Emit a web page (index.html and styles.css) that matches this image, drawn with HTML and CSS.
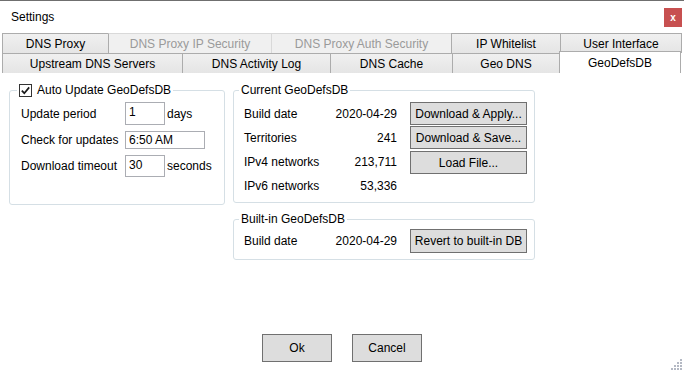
FILE: index.html
```html
<!DOCTYPE html>
<html lang="en">
  <head>
    <meta charset="UTF-8" />
    <title>Settings</title>
    <link rel="stylesheet" href="styles.css">
  </head>
  <body>
    <div class="window">
      <header class="titlebar">
        <span class="title">Settings</span>
        <span class="close">x</span>
      </header>

      <nav class="tabs">
        <div class="tab-row row-top">
          <div class="tab">DNS Proxy</div>
          <div class="tab disabled">DNS Proxy IP Security</div>
          <div class="tab disabled">DNS Proxy Auth Security</div>
          <div class="tab">IP Whitelist</div>
          <div class="tab">User Interface</div>
        </div>
        <div class="tab-row row-bottom">
          <div class="tab">Upstream DNS Servers</div>
          <div class="tab">DNS Activity Log</div>
          <div class="tab">DNS Cache</div>
          <div class="tab">Geo DNS</div>
          <div class="tab selected">GeoDefsDB</div>
        </div>
      </nav>

      <main class="content">
        <fieldset class="group update">
          <legend>
            <svg class="check" width="13" height="13" viewBox="0 0 13 13">
              <rect x="0.5" y="0.5" width="12" height="12" fill="#fff" stroke="#333" />
              <path d="M2.8 6.6 L5.3 9.2 L10.2 3.4" fill="none" stroke="#1a1a1a" stroke-width="1.7" />
            </svg>
            Auto Update GeoDefsDB
          </legend>
          <div class="settings-grid">
            <span>Update period</span>
            <input class="field num" type="text" value="1" />
            <span>days</span>

            <span>Check for updates</span>
            <input class="field time" type="text" value="6:50 AM" />

            <span>Download timeout</span>
            <input class="field timeout" type="text" value="30" />
            <span>seconds</span>
          </div>
        </fieldset>

        <div class="db-col">
          <fieldset class="group current">
            <legend>Current GeoDefsDB</legend>
            <div class="db-body">
              <div class="info">
                <span>Build date</span><span class="val">2020-04-29</span>
                <span>Territories</span><span class="val">241</span>
                <span>IPv4 networks</span><span class="val">213,711</span>
                <span>IPv6 networks</span><span class="val">53,336</span>
              </div>
              <div class="actions">
                <button class="btn">Download &amp; Apply...</button>
                <button class="btn">Download &amp; Save...</button>
                <button class="btn load">Load File...</button>
              </div>
            </div>
          </fieldset>

          <fieldset class="group builtin">
            <legend>Built-in GeoDefsDB</legend>
            <div class="db-body">
              <div class="info">
                <span>Build date</span><span class="val">2020-04-29</span>
              </div>
              <div class="actions">
                <button class="btn revert">Revert to built-in DB</button>
              </div>
            </div>
          </fieldset>
        </div>
      </main>

      <footer class="footer">
        <button class="btn dialog">Ok</button>
        <button class="btn dialog">Cancel</button>
      </footer>

      <svg class="grip" width="12" height="12" viewBox="0 0 12 12">
        <g fill="#b4b9c4">
          <rect x="10" y="1" width="2" height="2" />
          <rect x="7" y="4" width="2" height="2" />
          <rect x="10" y="4" width="2" height="2" />
          <rect x="4" y="7" width="2" height="2" />
          <rect x="7" y="7" width="2" height="2" />
          <rect x="10" y="7" width="2" height="2" />
          <rect x="1" y="10" width="2" height="2" />
          <rect x="4" y="10" width="2" height="2" />
          <rect x="7" y="10" width="2" height="2" />
          <rect x="10" y="10" width="2" height="2" />
        </g>
      </svg>
    </div>
  </body>
</html>
```

FILE: styles.css
```css
* {
  box-sizing: border-box;
  margin: 0;
  padding: 0;
}

body {
  font-family: "Segoe UI", "Liberation Sans", sans-serif;
  font-size: 12px;
  color: #000;
  background: #fff;
}

.window {
  position: relative;
  width: 684px;
  height: 372px;
  display: flex;
  flex-direction: column;
  border-top: 1px solid #6f6f6f;
  background: #fff;
}

/* title bar */
.titlebar {
  height: 32px;
  display: flex;
  align-items: center;
  justify-content: space-between;
  padding: 0 2px 0 11px;
}

.close {
  width: 18px;
  height: 19px;
  background: #c75050;
  color: #fff;
  font-size: 10px;
  font-weight: bold;
  display: flex;
  align-items: center;
  justify-content: center;
}

/* tabs */
.tabs {
  padding-left: 2px;
}

.tab-row {
  display: grid;
  height: 20px;
}

.row-top {
  grid-template-columns: 106px 163px 180px 109px 122px;
}

.row-bottom {
  grid-template-columns: 180px 148px 122px 107px 122px;
}

.tab {
  display: flex;
  align-items: center;
  justify-content: center;
  border-top: 1px solid #acacac;
  border-left: 1px solid #acacac;
  background: linear-gradient(#f0f0f0, #e5e5e5);
  white-space: nowrap;
}

.tab:last-child {
  border-right: 1px solid #acacac;
}

.tab.disabled {
  background: #f0f0f0;
  color: #9a9a9a;
  border-top-color: #d9d9d9;
}

.tab.disabled + .tab.disabled {
  border-left-color: #d9d9d9;
}

.tab.selected {
  background: #fff;
  margin-top: -2px;
  height: 22px;
}

/* content */
.content {
  flex: 1;
  display: flex;
  align-items: flex-start;
  gap: 8px;
  padding: 10px 0 0 9px;
}

.group {
  min-width: 0;
  border: 1px solid #d5dfe5;
  border-radius: 3px;
  padding: 0 6px 4px 10px;
}

.group legend {
  line-height: 14px;
  padding: 0 2px;
  margin-left: -5px;
}

.update {
  width: 216px;
  padding-bottom: 27px;
}

.update legend {
  display: flex;
  align-items: center;
  gap: 5px;
  margin-left: -3px;
}

.settings-grid {
  display: grid;
  grid-template-columns: 102px 40px auto;
  align-items: center;
  row-gap: 6px;
  column-gap: 2px;
  margin-top: 5px;
  padding-left: 1px;
}

.field {
  font: inherit;
  color: #000;
  border: 1px solid #abadb3;
  background: #fff;
  padding: 0 3px;
}

.num {
  width: 40px;
  height: 23px;
  padding-bottom: 4px;
}

.time {
  grid-column: span 2;
  width: 80px;
  height: 18px;
}

.timeout {
  width: 40px;
  height: 22px;
  padding-bottom: 3px;
}

.db-col {
  width: 302px;
  display: flex;
  flex-direction: column;
  gap: 9px;
}

.db-body {
  display: grid;
  grid-template-columns: 153px 117px;
  column-gap: 13px;
  margin-top: 5px;
}

.builtin .db-body {
  margin-top: 3px;
}

.builtin {
  padding-bottom: 6px;
}

.info {
  display: grid;
  grid-template-columns: 1fr auto;
  grid-auto-rows: 24px;
  align-items: center;
}

.val {
  text-align: right;
}

.actions {
  display: flex;
  flex-direction: column;
  gap: 1px;
}

.btn {
  font: inherit;
  color: #000;
  background: #dddddd;
  border: 1px solid #707070;
  height: 23px;
  white-space: nowrap;
}

.btn.load {
  margin-top: 1px;
}

.btn.revert {
  height: 24px;
}

/* dialog buttons */
.footer {
  display: flex;
  justify-content: center;
  gap: 20px;
  padding-bottom: 10px;
}

.btn.dialog {
  width: 70px;
  height: 28px;
}

.grip {
  position: absolute;
  right: 2px;
  bottom: 2px;
}
```
